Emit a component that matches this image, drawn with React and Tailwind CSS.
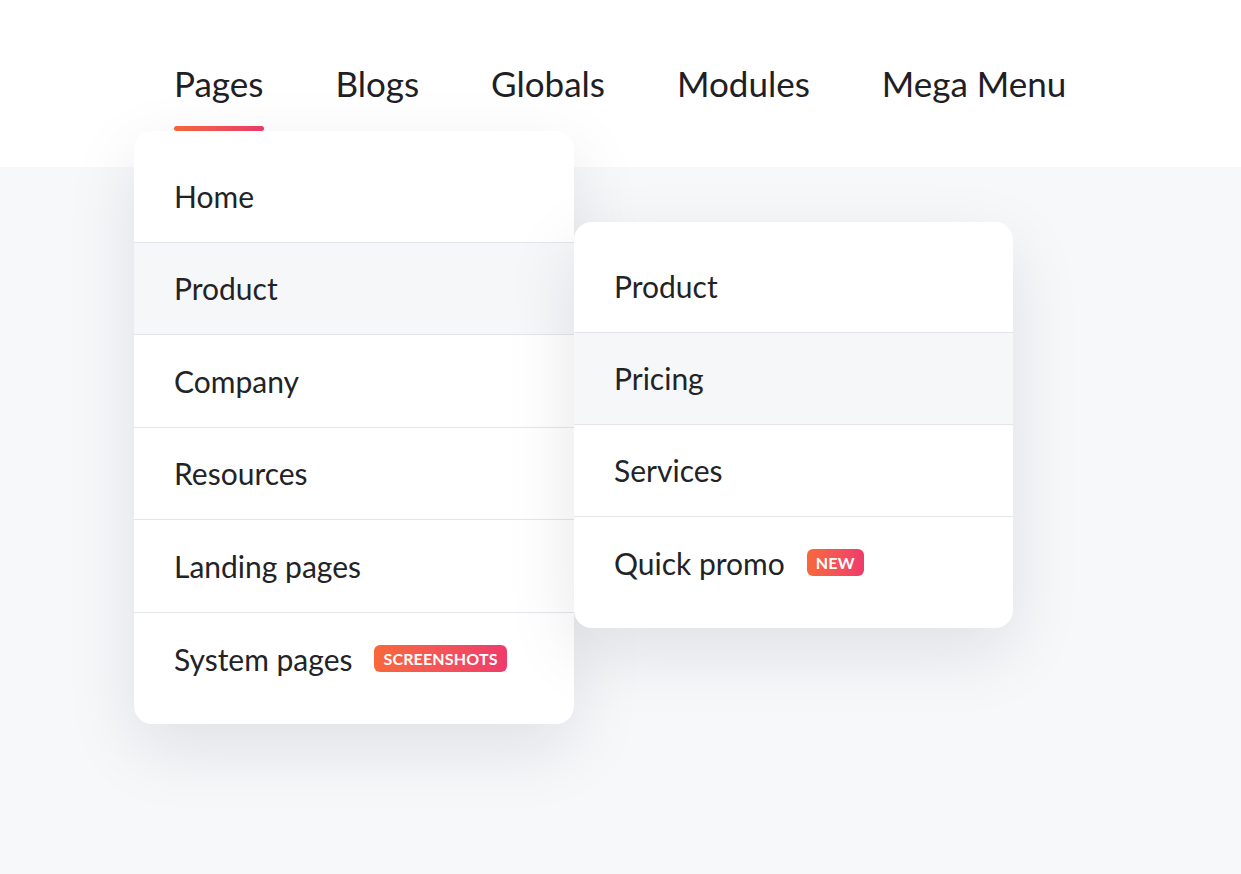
const font = { fontFamily: "Lato, 'Noto Sans', sans-serif" };

const mainItems = ["Home", "Product", "Company", "Resources", "Landing pages", "System pages"];
const subItems = ["Product", "Pricing", "Services", "Quick promo"];

function Badge({ children }) {
	return (
		<span className="ml-[22px] inline-flex h-[27px] items-center rounded-[6px] bg-gradient-to-r from-[#f8683a] to-[#ee3b6b] px-[9px] text-[16px] font-bold uppercase leading-none tracking-[0.01em] text-white">
			{children}
		</span>
	);
}

function SubMenu() {
	return (
		<div className="absolute left-[100%] top-[-21px] z-20 w-[439px] rounded-[18px] bg-white py-[19px] shadow-[0_24px_70px_rgba(20,24,40,0.10)]">
			{subItems.map((label, i) => (
				<div
					key={label}
					className={`flex h-[92px] items-center px-[40px] text-[30px] text-[#222326] ${i < subItems.length - 1 ? "border-b border-[#e3e5ea]" : ""} ${label === "Pricing" ? "bg-[#f6f7f9]" : ""}`}
				>
					{label}
					{label === "Quick promo" && <Badge>New</Badge>}
				</div>
			))}
		</div>
	);
}

function Dropdown() {
	return (
		<div className="absolute left-[-40px] top-[131px] z-10 w-[440px] rounded-[18px] bg-white py-[19px] shadow-[0_24px_70px_rgba(20,24,40,0.10)]">
			{mainItems.map((label, i) => (
				<div
					key={label}
					className={`relative flex h-[92.5px] items-center px-[40px] text-[30px] text-[#222326] ${i < mainItems.length - 1 ? "border-b border-[#e3e5ea]" : ""} ${label === "Product" ? "bg-[#f6f7f9]" : ""}`}
				>
					{label}
					{label === "System pages" && <Badge>Screenshots</Badge>}
					{label === "Product" && <SubMenu />}
				</div>
			))}
		</div>
	);
}

export default function App() {
	const nav = ["Pages", "Blogs", "Globals", "Modules", "Mega Menu"];

	return (
		<div className="min-h-[874px] bg-[#f7f8fa]" style={font}>
			<header className="h-[167px] bg-white">
				<ul className="flex gap-[72px] pl-[174px]">
					{nav.map((label) => (
						<li key={label} className="relative h-[131px] pt-[62px] text-[35px] leading-[42px] text-[#1e2024]">
							{label}
							{label === "Pages" && (
								<>
									<span className="absolute bottom-0 left-0 h-[5px] w-[90px] rounded-full bg-gradient-to-r from-[#f8683a] to-[#ee3b6b]" />
									<Dropdown />
								</>
							)}
						</li>
					))}
				</ul>
			</header>
		</div>
	);
}
